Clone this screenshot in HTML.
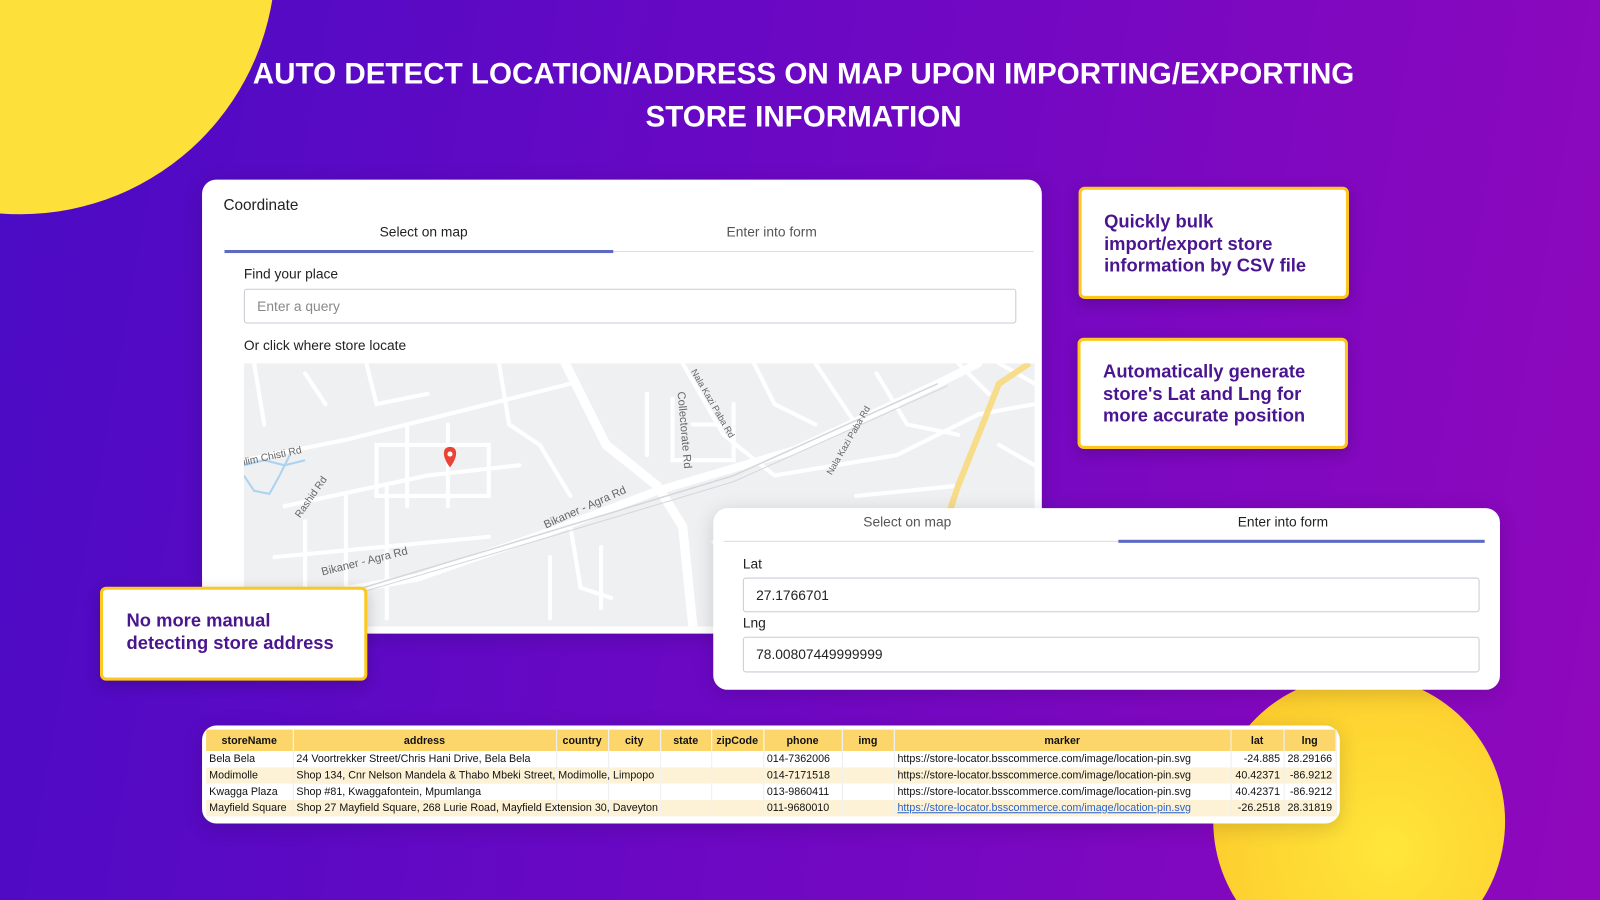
<!DOCTYPE html>
<html><head><meta charset="utf-8"><style>
*{margin:0;padding:0;box-sizing:border-box}
html,body{width:1600px;height:900px;overflow:hidden}
body{background:linear-gradient(100deg,#4a0bc4 0%,#6a08c4 45%,#9008bc 100%);font-family:"Liberation Sans",sans-serif;position:relative}
#w{position:absolute;left:0;top:0;width:1568px;height:882px;transform:scale(1.0204);transform-origin:0 0;overflow:hidden}
.abs{position:absolute}
.circ{position:absolute;border-radius:50%;background:radial-gradient(circle at 60% 60%,#ffe63a,#fcc52a)}
h1{position:absolute;left:0;width:1575px;top:52px;text-align:center;color:#fff;font-size:29px;line-height:42px;font-weight:bold;letter-spacing:0px}
.card{position:absolute;background:#fff;border-radius:14px;box-shadow:0 4px 20px rgba(0,0,0,.15)}
.t{position:absolute;font-size:13.5px;color:#222}
.g{color:#555}
.inp{position:absolute;border:1px solid #c9cbd4;border-radius:3px;background:#fff;font-size:13.5px;color:#222;padding-left:12px;display:flex;align-items:center}
.call{position:absolute;background:#fff;border:3px solid #fcc81f;border-radius:6px;color:#4a168f;font-weight:bold;font-size:18px;line-height:21.5px;padding-left:22px;box-shadow:0 4px 14px rgba(0,0,0,.2)}
table{border-collapse:collapse;font-size:10.5px;color:#111;table-layout:fixed}
td,th{height:16px;padding:0 3px;white-space:nowrap;overflow:hidden;border-right:1px solid #eee}
th{background:#fdd66b;font-weight:bold;text-align:center;height:21px}
.r{text-align:right}
</style></head><body><div id="w">
<div class="circ" style="left:-230px;top:-290px;width:500px;height:500px;background:#fde13a"></div>
<div class="circ" style="left:1189px;top:662px;width:286px;height:286px"></div>
<h1>AUTO DETECT LOCATION/ADDRESS ON MAP UPON IMPORTING/EXPORTING<br>STORE INFORMATION</h1>

<div class="card" style="left:198px;top:176px;width:823px;height:445px;overflow:hidden">
 <div class="t" style="left:21px;top:17px;font-size:15px">Coordinate</div>
 <div class="t" style="left:174px;top:44px">Select on map</div>
 <div class="t g" style="left:514px;top:44px">Enter into form</div>
 <div class="abs" style="left:22px;top:70px;width:793px;height:1px;background:#ddd"></div>
 <div class="abs" style="left:22px;top:69px;width:381px;height:3px;background:#5c6ac4"></div>
 <div class="t" style="left:41px;top:85px">Find your place</div>
 <div class="inp" style="left:41px;top:107px;width:757px;height:34px;color:#888">Enter a query</div>
 <div class="t" style="left:41px;top:155px">Or click where store locate</div>
 <svg class="abs" style="left:41px;top:180px" width="775" height="258" viewBox="0 0 775 258">
  <rect width="775" height="258" fill="#eff0f2"/>
  <g fill="none" stroke="#fff" stroke-linecap="round">
   <path d="M315 0 L355 80 L405 120 L430 160 L440 258" stroke-width="9"/>
   <path d="M0 240 L170 210 L300 165 L405 125 L540 85 L680 20 L720 0" stroke-width="8"/>
   <path d="M0 95 L100 75 L200 50 L320 20" stroke-width="4"/>
   <path d="M40 140 L180 110 L270 100 M60 155 L60 258 M100 130 L100 258 M140 120 L140 250 M30 190 L240 170" stroke-width="4"/>
   <path d="M130 80 L240 80 L240 130 L130 130 Z M160 60 L160 140 M200 60 L200 140" stroke-width="4"/>
   <path d="M420 35 L420 95 L480 95 L480 40 M440 60 L470 60 M395 30 L395 90" stroke-width="4"/>
   <path d="M430 0 L470 70 L520 110 L640 90 L720 50 L775 40" stroke-width="4"/>
   <path d="M500 0 L520 40 L560 60 M560 0 L600 60 M620 10 L650 60 L700 70 M700 0 L730 30" stroke-width="4"/>
   <path d="M250 0 L260 60 L290 80 L320 130 M10 0 L20 60 M60 10 L80 40 M120 0 L130 40 L180 30" stroke-width="4"/>
   <path d="M280 170 L320 160 L330 220 L360 230 M300 190 L300 250 M350 180 L350 240 M460 175 L560 170 L620 200 M480 210 L480 250 M520 210 L520 258 M560 200 L560 250" stroke-width="4"/>
   <path d="M740 0 L775 20 M740 80 L775 100 M600 130 L700 120 M650 150 L650 258" stroke-width="4"/>
  </g>
  <path d="M0 255 L250 180 L480 110 L680 20" stroke="#d6d7da" stroke-width="1.5" fill="none"/>
  <path d="M0 258 L250 185 L480 116 L690 22" stroke="#d6d7da" stroke-width="1" fill="none"/>
  <path d="M770 0 L740 20 L720 70 L700 120 L690 150" stroke="#f7dc8a" stroke-width="6" fill="none"/>
  <path d="M0 100 L20 95 L40 100 L60 95 M0 110 L10 125 L25 128 L35 110 L45 90" stroke="#aad3f2" stroke-width="2" fill="none"/>
  <g font-family="Liberation Sans" font-size="10" fill="#666">
   <text x="0" y="100" transform="rotate(-12 0 100)">ilim Chisti Rd</text>
   <text x="55" y="152" transform="rotate(-55 55 152)">Rashid Rd</text>
   <text x="296" y="162" transform="rotate(-24 296 162)" font-size="11">Bikaner - Agra Rd</text>
   <text x="77" y="208" transform="rotate(-14 77 208)" font-size="11">Bikaner - Agra Rd</text>
   <text x="425" y="28" transform="rotate(85 425 28)" font-size="11">Collectorate Rd</text>
   <text x="438" y="8" transform="rotate(60 438 8)" font-size="9">Nala Kazi Paba Rd</text>
   <text x="576" y="110" transform="rotate(-60 576 110)" font-size="9">Nala Kazi Paba Rd</text>
  </g>
  <path d="M202 102 C194 92 194 82 202 82 C210 82 210 92 202 102 Z" fill="#ea4335"/>
  <circle cx="202" cy="89" r="2.5" fill="#fff"/>
 </svg>
</div>

<div class="call" style="left:1057px;top:183px;width:265px;height:110px;padding-top:21px">Quickly bulk<br>import/export store<br>information by CSV file</div>
<div class="call" style="left:1056px;top:331px;width:265px;height:109px;padding-top:20px">Automatically generate<br>store's Lat and Lng for<br>more accurate position</div>
<div class="call" style="left:98px;top:575px;width:262px;height:92px;padding-top:20px;padding-left:23px">No more manual<br>detecting store address</div>

<div class="card" style="left:699px;top:498px;width:771px;height:178px">
 <div class="t g" style="left:147px;top:6px">Select on map</div>
 <div class="t" style="left:514px;top:6px">Enter into form</div>
 <div class="abs" style="left:10px;top:32px;width:746px;height:1px;background:#ddd"></div>
 <div class="abs" style="left:397px;top:31px;width:359px;height:3px;background:#5c6ac4"></div>
 <div class="t" style="left:29px;top:47px">Lat</div>
 <div class="inp" style="left:29px;top:68px;width:722px;height:34px">27.1766701</div>
 <div class="t" style="left:29px;top:105px">Lng</div>
 <div class="inp" style="left:29px;top:126px;width:722px;height:35px">78.00807449999999</div>
</div>

<div class="card" style="left:198px;top:711px;width:1115px;height:96px;padding:4px">
<table style="width:1107px">
<colgroup><col style="width:85px"><col style="width:258px"><col style="width:51px"><col style="width:51px"><col style="width:50px"><col style="width:51px"><col style="width:77px"><col style="width:51px"><col style="width:330px"><col style="width:52px"><col style="width:51px"></colgroup>
<tr><th>storeName</th><th>address</th><th>country</th><th>city</th><th>state</th><th>zipCode</th><th>phone</th><th>img</th><th>marker</th><th>lat</th><th>lng</th></tr>
<tr><td>Bela Bela</td><td>24 Voortrekker Street/Chris Hani Drive, Bela Bela</td><td></td><td></td><td></td><td></td><td>014-7362006</td><td></td><td>https://store-locator.bsscommerce.com/image/location-pin.svg</td><td class="r">-24.885</td><td class="r">28.29166</td></tr>
<tr style="background:#fdf2d6"><td>Modimolle</td><td style="overflow:visible">Shop 134, Cnr Nelson Mandela &amp; Thabo Mbeki Street, Modimolle, Limpopo</td><td></td><td></td><td></td><td></td><td>014-7171518</td><td></td><td>https://store-locator.bsscommerce.com/image/location-pin.svg</td><td class="r">40.42371</td><td class="r">-86.9212</td></tr>
<tr><td>Kwagga Plaza</td><td>Shop #81, Kwaggafontein, Mpumlanga</td><td></td><td></td><td></td><td></td><td>013-9860411</td><td></td><td>https://store-locator.bsscommerce.com/image/location-pin.svg</td><td class="r">40.42371</td><td class="r">-86.9212</td></tr>
<tr style="background:#fdf2d6"><td>Mayfield Square</td><td style="overflow:visible">Shop 27 Mayfield Square, 268 Lurie Road, Mayfield Extension 30, Daveyton</td><td></td><td></td><td></td><td></td><td>011-9680010</td><td></td><td style="color:#2a62c9;text-decoration:underline">https://store-locator.bsscommerce.com/image/location-pin.svg</td><td class="r">-26.2518</td><td class="r">28.31819</td></tr>
</table>
</div>
</div></body></html>
